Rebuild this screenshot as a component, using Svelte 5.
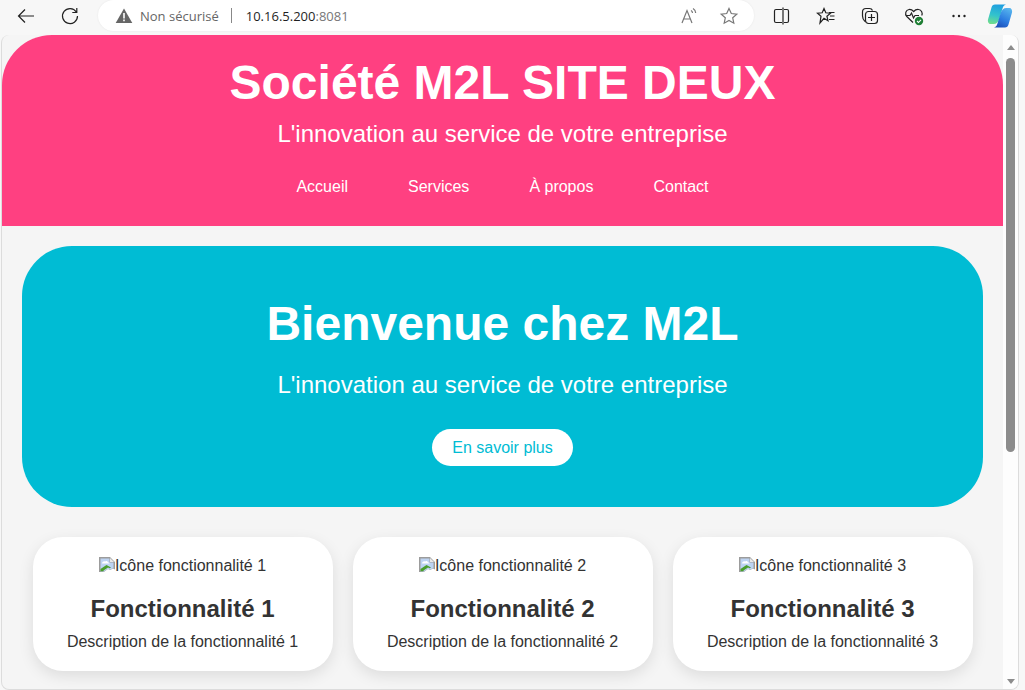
<script>
    const links = ["Accueil", "Services", "À propos", "Contact"];
    const features = [1, 2, 3];
</script>

<div class="window">
    <div class="toolbar">
        <button class="tool back" aria-label="Retour">
            <svg width="20" height="20" viewBox="0 0 20 20"><path d="M18 10H2.500M9 3.500 2.500 10 9 16.500" /></svg>
        </button>
        <button class="tool reload" aria-label="Actualiser">
            <svg width="20" height="20" viewBox="0 0 20 20"><path d="M16.300 6A7.500 7.500 0 1 0 17.500 10M16.800 2v4.500h-4.500" /></svg>
        </button>
        <div class="address">
            <svg class="warn" width="18" height="18" viewBox="0 0 18 18"><path d="M9 1.500 17.300 16H.7Z" fill="#666" stroke="none" /><path d="M9 6v5.500M9 12.500v1.700" stroke="#fff" stroke-width="1.600" /></svg>
            <span class="secure">Non sécurisé</span>
            <span class="sep"></span>
            <span class="url">10.16.5.200<span class="port">:8081</span></span>
            <span class="grow"></span>
            <svg class="addr-icon" width="20" height="20" viewBox="0 0 20 20"><path d="M2 17 7 4.500 12 17M3.700 13h6.600M11 4.500c1 .6 1.500 1.400 1.500 2.400M13 2.500c1.700 1 2.700 2.500 2.700 4.500" /></svg>
            <svg class="addr-icon star" width="20" height="20" viewBox="0 0 20 20"><path d="m10 2.500 2.300 5 5.500.6-4.100 3.700 1.100 5.400-4.800-2.700-4.800 2.700 1.100-5.400-4.100-3.700 5.500-.6Z" /></svg>
        </div>
        <div class="actions">
            <svg width="20" height="20" viewBox="0 0 20 20"><path d="M10 3.500H4A1.500 1.500 0 0 0 2.500 5v10A1.500 1.500 0 0 0 4 16.500h6M12 3.500h3A1.500 1.500 0 0 1 16.500 5v10a1.500 1.500 0 0 1-1.500 1.500h-3M11 1.500v17" /></svg>
            <svg width="20" height="20" viewBox="0 0 20 20"><path d="m8 2.500 1.800 4.300 4.700.4-3.600 3 1.100 4.600-4-2.500-4 4.700 1-6.800-3.500-3 4.700-.4ZM13 6.500h5.500M14 10h4.500M13 13.500h5.500" /></svg>
            <svg width="20" height="20" viewBox="0 0 20 20"><path d="M5 15.500C3.500 14 2.500 12 2.500 10V6A3.500 3.500 0 0 1 6 2.500h3.500c1.500 0 2.500.7 3 2" /><rect x="5.500" y="5.500" width="12" height="12" rx="3" /><path d="M11.500 8v7M8 11.500h7" /></svg>
            <svg width="20" height="20" viewBox="0 0 20 20"><path d="M9 16.500 2.800 10.500C.5 8 1.800 3.800 5 3.500 7 3.300 8.300 4 9.700 5.500 11 4 12.500 3.300 14.500 3.500 17.500 3.800 19 7 17.700 9.500M1.500 9.500h4.500l1.500-2.500 2 5 1.500-2.500h4" /><circle cx="15" cy="15" r="4.200" fill="#1e7e34" stroke="none" /><path d="m13 15 1.500 1.500 2.500-2.700" stroke="#fff" stroke-width="1.100" /></svg>
            <svg class="dots" width="20" height="20" viewBox="0 0 20 20"><circle cx="4.500" cy="10" r="1.200" /><circle cx="10" cy="10" r="1.200" /><circle cx="15.500" cy="10" r="1.200" /></svg>
            <svg class="copilot" width="26" height="26" viewBox="0 0 26 26">
                <defs>
                    <linearGradient id="cp-left" x1="0.5" y1="0" x2="0.3" y2="1">
                        <stop offset="0" stop-color="#1f9fe0" />
                        <stop offset="0.55" stop-color="#33c3cc" />
                        <stop offset="1" stop-color="#6fdc8c" />
                    </linearGradient>
                    <linearGradient id="cp-right" x1="0.8" y1="0" x2="0.3" y2="1">
                        <stop offset="0" stop-color="#58b6ee" />
                        <stop offset="0.6" stop-color="#2b7be0" />
                        <stop offset="1" stop-color="#1d4fb8" />
                    </linearGradient>
                </defs>
                <path d="M8 1.500H19C16.500 2 16 4 15.200 6.500L12.500 15.500C11.500 19 9.500 21 6.500 21H3.500C1.500 21 .5 18.500 1 16.500L4.500 4.500C5 2.700 6.200 1.500 8 1.500Z" fill="url(#cp-left)" stroke="none" />
                <path d="M18 24.500H7C9.500 24 10 22 10.800 19.500L13.500 10.500C14.500 7 16.500 5 19.500 5H22.500C24.500 5 25.500 7.500 25 9.500L21.500 21.500C21 23.300 19.800 24.500 18 24.500Z" fill="url(#cp-right)" stroke="none" />
            </svg>
        </div>
    </div>

    <div class="viewport">
        <div class="page">
            <header>
                <h1>Société M2L SITE DEUX</h1>
                <p>L'innovation au service de votre entreprise</p>
                <nav>
                    {#each links as link}
                        <a href="#top">{link}</a>
                    {/each}
                </nav>
            </header>

            <section class="hero">
                <h2>Bienvenue chez M2L</h2>
                <p>L'innovation au service de votre entreprise</p>
                <a class="cta" href="#top">En savoir plus</a>
            </section>

            <section class="features">
                {#each features as n}
                    <div class="card">
                        <div class="broken">
                            <svg width="16" height="16" viewBox="0 0 16 16">
                                <path d="M0 0h11l5 5v7.500l-2-1-3 1.500-2-1-3 2-1 1H0Z" fill="#9c9c9c" />
                                <path d="M1.500 1.500h9v4h4v5.500l-.5.200-3 1.500-2-1-3 2-1 .800H1.500Z" fill="#bdd3f2" />
                                <path d="M3 6.500c.3-1.800 1.800-2.500 3-2 1-1 3-.5 3 1 1 0 1.500.5 1.500 1Z" fill="#fff" />
                                <path d="M1.500 13V12L7.500 8l4.500 2.500-1.300.7-1.700-.7-3 2-1 .800-1 1H1.500Z" fill="#4a9e2b" />
                                <path d="M11 1v4h4Z" fill="#e8e8e8" />
                            </svg><span>Icône fonctionnalité {n}</span>
                        </div>
                        <h3>Fonctionnalité {n}</h3>
                        <p>Description de la fonctionnalité {n}</p>
                    </div>
                {/each}
            </section>
        </div>
        <div class="scrollbar">
            <div class="arrow up"></div>
            <div class="thumb"></div>
            <div class="track"></div>
            <div class="arrow down"></div>
        </div>
    </div>
</div>

<style>
    :global(body) {
        margin: 0;
        background: #f7f7f7;
        overflow: hidden;
    }

    .window {
        width: 1025px;
        height: 690px;
        overflow: hidden;
        display: flex;
        flex-direction: column;
        font-family: "Liberation Sans", Arial, sans-serif;
    }

    .toolbar {
        height: 35px;
        flex: none;
        display: flex;
        align-items: center;
        box-sizing: border-box;
        padding: 0 0 4px 0;
    }

    .toolbar svg {
        fill: none;
        stroke: #222;
        stroke-width: 1.2;
        flex: none;
    }

    .tool {
        width: 44px;
        height: 30px;
        padding: 0;
        border: 0;
        background: none;
        display: flex;
        align-items: center;
        justify-content: center;
    }

    .back {
        margin-left: 4px;
    }

    .reload {
        margin-right: 6px;
    }

    .address {
        width: 656px;
        height: 31px;
        background: #fff;
        border-radius: 16px;
        display: flex;
        align-items: center;
        box-sizing: border-box;
        padding: 0 15px 0 17px;
        font-size: 13px;
        box-shadow: 0 0 2px rgba(0, 0, 0, 0.08);
    }

    .secure {
        color: #666;
        margin-left: 7px;
        font-family: "Open Sans", sans-serif;
    }

    .sep {
        width: 1px;
        height: 15px;
        background: #888;
        margin: 0 14px 0 12px;
    }

    .url {
        color: #1f1f1f;
        font-family: "Open Sans", sans-serif;
    }

    .port {
        color: #777;
    }

    .grow {
        flex: 1;
    }

    .toolbar .addr-icon {
        stroke: #777;
    }

    .star {
        margin-left: 19px;
    }

    .actions {
        display: flex;
        align-items: center;
        gap: 24px;
        margin-left: 18px;
    }

    .toolbar .dots {
        fill: #222;
        stroke: none;
        margin-left: 1px;
    }

    .copilot {
        margin-left: -6px;
    }

    .viewport {
        flex: 1;
        min-height: 0;
        display: flex;
        margin: 0 6px 0 1px;
        background: #f5f5f5;
        border: 1px solid #dcdcdc;
        border-width: 0 1px 1px 1px;
        border-radius: 8px;
        overflow: hidden;
    }

    .page {
        flex: 1;
        min-width: 0;
        overflow: hidden;
        color: #333;
    }

    header {
        background: #ff4081;
        color: #fff;
        text-align: center;
        border-radius: 50px 50px 0 0;
        height: 191px;
        box-sizing: border-box;
        padding-top: 20px;
    }

    h1 {
        font-size: 48px;
        line-height: 55px;
        margin: 0;
    }

    header p {
        font-size: 24px;
        line-height: 27px;
        margin: 10px 0 0;
    }

    nav {
        display: flex;
        justify-content: center;
        gap: 60px;
        margin-top: 31px;
    }

    nav a {
        color: #fff;
        text-decoration: none;
        font-size: 16px;
        line-height: 18px;
    }

    .hero {
        background: #00bcd4;
        color: #fff;
        text-align: center;
        margin: 20px 20px 0;
        height: 261px;
        box-sizing: border-box;
        border-radius: 50px;
        padding-top: 50px;
    }

    .hero h2 {
        font-size: 48px;
        line-height: 55px;
        margin: 0;
    }

    .hero p {
        font-size: 24px;
        line-height: 27px;
        margin: 20px 0 0;
    }

    .cta {
        display: inline-block;
        margin-top: 31px;
        background: #fff;
        color: #00bcd4;
        text-decoration: none;
        font-size: 16px;
        line-height: 17px;
        padding: 10px 20px;
        border-radius: 25px;
    }

    .features {
        display: flex;
        justify-content: center;
        gap: 20px;
        margin-top: 30px;
    }

    .card {
        width: 300px;
        height: 134px;
        box-sizing: border-box;
        background: #fff;
        border-radius: 30px;
        box-shadow: 0 5px 15px rgba(0, 0, 0, 0.1);
        text-align: center;
        padding-top: 20px;
    }

    .broken {
        display: flex;
        justify-content: center;
        align-items: flex-start;
        font-size: 16px;
        line-height: 18px;
    }

    .broken svg {
        flex: none;
    }

    h3 {
        font-size: 24px;
        line-height: 27px;
        margin: 20px 0 0;
    }

    .card p {
        font-size: 16px;
        line-height: 18px;
        margin: 11px 0 0;
    }

    .scrollbar {
        width: 15px;
        flex: none;
        background: #fdfdfd;
        display: flex;
        flex-direction: column;
        align-items: center;
    }

    .arrow {
        width: 0;
        height: 0;
        border-left: 4px solid transparent;
        border-right: 4px solid transparent;
    }

    .up {
        border-bottom: 5px solid #8c8c8c;
        margin-top: 10px;
    }

    .down {
        border-top: 5px solid #8c8c8c;
        margin-bottom: 5px;
    }

    .thumb {
        width: 9px;
        height: 394px;
        background: #8c8c8c;
        border-radius: 5px;
        margin-top: 8px;
    }

    .track {
        flex: 1;
    }
</style>
